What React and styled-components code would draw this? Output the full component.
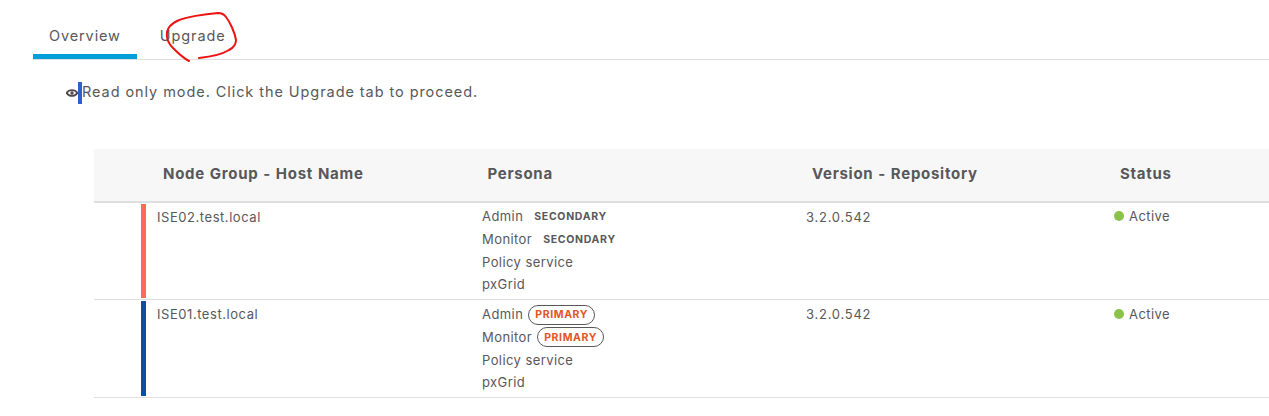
import React from "react";
import styled, { createGlobalStyle } from "styled-components";

const Global = createGlobalStyle`
  html, body { margin: 0; padding: 0; background: #fff; }
  body { font-family: Inter, "Liberation Sans", sans-serif; color: #58585b; }
`;
const Page = styled.div`
  position: relative;
  width: 1269px;
  height: 416px;
  overflow: hidden;
  padding-top: 17px;
  box-sizing: border-box;
`;
const Tabs = styled.div`
  display: flex;
  margin-left: 33px;
  height: 43px;
  border-bottom: 1px solid #dfdfdf;
  box-sizing: border-box;
  gap: 7px;
`;
const Tab = styled.div`
  height: 42px;
  box-sizing: border-box;
  padding: 10px 16px 0;
  font-size: 14.5px;
  line-height: 18px;
  letter-spacing: 0.88px;
  border-bottom: ${(p) => (p.$active ? "5px solid #049fd9" : "none")};
`;
const Notice = styled.div`
  display: flex;
  align-items: center;
  height: 22px;
  margin: 22px 0 0 66px;
  font-size: 14.5px;
  line-height: 18px;
  letter-spacing: 0.93px;
`;
const NoticeText = styled.span`
  margin-top: -3px;
`;
const Marker = styled.span`
  width: 4px;
  height: 22px;
  background: #2f5fcf;
`;
const Table = styled.div`
  margin: 45px 0 0 94px;
`;
const Head = styled.div`
  display: grid;
  grid-template-columns: 69px 324.5px 324.5px 308px 1fr;
  height: 54px;
  box-sizing: border-box;
  align-items: center;
  background: #f7f7f7;
  border-bottom: 2px solid #dfdfdf;
  font-size: 15px;
  font-weight: 700;
  letter-spacing: 0.72px;
  word-spacing: 0.6px;
  padding-bottom: 3px;
`;
const Row = styled.div`
  display: grid;
  grid-template-columns: 47px 5px 11px 325px 325px 307px 1fr;
  height: ${(p) => p.$h}px;
  box-sizing: border-box;
  border-bottom: 1px solid #dfdfdf;
  font-size: 13px;
  letter-spacing: 0.42px;
`;
const Bar = styled.div`
  grid-column: 2;
  background: ${(p) => p.$color};
  margin: 1px 0 1px;
`;
const Cell = styled.div`
  padding-top: 6px;
  line-height: 17px;
  letter-spacing: 0.55px;
`;
const VersionCell = styled(Cell)`
  margin-left: -1px;
  letter-spacing: 0.75px;
`;
const Personas = styled.div`
  display: flex;
  flex-direction: column;
  gap: 5.6px;
  padding-top: ${(p) => p.$top}px;
`;
const Persona = styled.div`
  display: flex;
  align-items: center;
  height: 17px;
  line-height: 17px;
`;
const Secondary = styled.span`
  margin-left: 11px;
  font-size: 10.5px;
  font-weight: 700;
  letter-spacing: 0.7px;
`;
const Primary = styled.span`
  margin-left: 5px;
  height: 20px;
  box-sizing: border-box;
  display: inline-flex;
  align-items: center;
  padding: 0 6px;
  border: 1px solid #58585b;
  border-radius: 10px;
  color: #e2561f;
  font-size: 10.5px;
  font-weight: 700;
  letter-spacing: 0.62px;
`;
const Status = styled.div`
  display: flex;
  align-items: center;
  gap: 5px;
  height: 17px;
  margin-top: ${(p) => p.$top}px;
`;
const Dot = styled.span`
  width: 10px;
  height: 10px;
  border-radius: 50%;
  background: #8bc34a;
`;
const Scribble = styled.svg`
  position: absolute;
  left: 155px;
  top: 5px;
  pointer-events: none;
`;

const Eye = () => (
  <svg width="12" height="12" viewBox="0 0 12 12" aria-hidden="true">
    <path d="M0.6 6C1.8 4 3.7 3.1 6 3.1S10.2 4 11.4 6C10.2 8 8.3 8.9 6 8.9S1.8 8 0.6 6Z" fill="none" stroke="#4f4a48" strokeWidth="1.7" />
    <circle cx="6" cy="6" r="1.7" fill="#4f4a48" />
  </svg>
);

const row = (name, tag, color, h, top, statusTop) => (
  <Row $h={h}>
    <Bar $color={color} />
    <span />
    <Cell>{name}</Cell>
    <Personas $top={top}>
      <Persona>Admin{tag}</Persona>
      <Persona>Monitor{tag}</Persona>
      <Persona>Policy service</Persona>
      <Persona>pxGrid</Persona>
    </Personas>
    <VersionCell>3.2.0.542</VersionCell>
    <Status $top={statusTop}><Dot />Active</Status>
  </Row>
);

export default function App() {
  return (
    <Page>
      <Global />
      <Tabs>
        <Tab $active>Overview</Tab>
        <Tab>Upgrade</Tab>
      </Tabs>
      <Notice><Eye /><Marker /><NoticeText>Read only mode. Click the Upgrade tab to proceed.</NoticeText></Notice>
      <Table>
        <Head>
          <span />
          <span>Node Group - Host Name</span>
          <span>Persona</span>
          <span>Version - Repository</span>
          <span>Status</span>
        </Head>
        {row("ISE02.test.local", <Secondary>SECONDARY</Secondary>, "#ff6a56", 97, 5.4, 4)}
        {row("ISE01.test.local", <Primary>PRIMARY</Primary>, "#0a4ea6", 98, 6.4, 5)}
      </Table>
      <Scribble width="90" height="60" viewBox="0 0 90 60" aria-hidden="true">
        <path d="M34 56C30 54 22 47 18 43C14 39 11 33 12 27C13 22 18 18 22 16C30 12 50 9 63 8C67 8 69 9 71 12C75 17 80 28 81 35C81 40 78 43 74 45C66 50 54 52 44 53" fill="none" stroke="#ee1111" strokeWidth="2" strokeLinecap="round" />
      </Scribble>
    </Page>
  );
}
